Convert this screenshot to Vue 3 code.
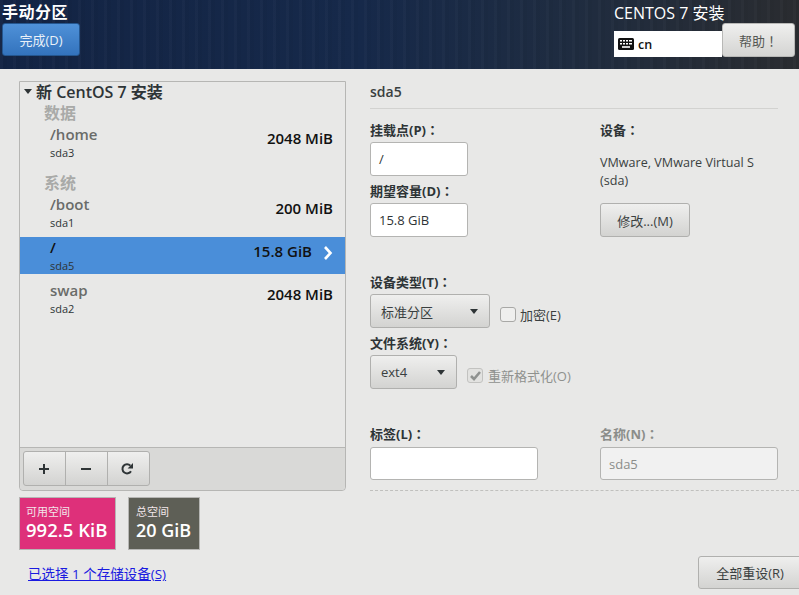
<script setup>
const groups = [
  { name: '数据', items: [{ m: '/home', d: 'sda3', s: '2048 MiB' }] },
  { name: '系统', items: [
    { m: '/boot', d: 'sda1', s: '200 MiB' },
    { m: '/', d: 'sda5', s: '15.8 GiB', sel: true },
    { m: 'swap', d: 'sda2', s: '2048 MiB' }
  ] }
]
</script>

<template>
  <div class="page">
    <header class="top">
      <div class="top-left">
        <div class="title">手动分区</div>
        <button class="done">完成(D)</button>
      </div>
      <div class="top-right">
        <div class="brand">CENTOS 7 安装</div>
        <div class="kb-row">
          <div class="kb">
            <svg width="16" height="12" viewBox="0 0 16 12"><rect width="16" height="12" rx="1.5" fill="#111"/><g fill="#fff"><rect x="2" y="2" width="2" height="1.5"/><rect x="5" y="2" width="2" height="1.5"/><rect x="8" y="2" width="2" height="1.5"/><rect x="11" y="2" width="3" height="1.5"/><rect x="2" y="5" width="2" height="1.5"/><rect x="5" y="5" width="2" height="1.5"/><rect x="8" y="5" width="2" height="1.5"/><rect x="11" y="5" width="3" height="1.5"/><rect x="4" y="8.2" width="8" height="1.6"/></g></svg>
            <span>cn</span>
          </div>
          <button class="help">帮助<span class="colon">！</span></button>
        </div>
      </div>
    </header>

    <main class="body">
      <section class="left">
        <div class="panel">
          <div class="tree">
            <div class="root"><span class="caret"></span>新 CentOS 7 安装</div>
            <template v-for="g in groups" :key="g.name">
              <div class="group">{{ g.name }}</div>
              <div v-for="i in g.items" :key="i.d" class="row" :class="{ sel: i.sel }">
                <div class="names">
                  <div class="mount">{{ i.m }}</div>
                  <div class="dev">{{ i.d }}</div>
                </div>
                <div class="size">{{ i.s }}</div>
                <svg v-if="i.sel" class="chev" width="10" height="14" viewBox="0 0 10 14"><path d="M2 1 7.5 7 2 13" fill="none" stroke="#fff" stroke-width="2.6"/></svg>
              </div>
            </template>
          </div>
          <div class="toolbar">
            <div class="tools">
              <button class="tool"><svg width="12" height="12" viewBox="0 0 12 12"><path d="M6 1v10M1 6h10" stroke="#2e3436" stroke-width="2"/></svg></button>
              <button class="tool"><svg width="12" height="12" viewBox="0 0 12 12"><path d="M1 6h10" stroke="#2e3436" stroke-width="2"/></svg></button>
              <button class="tool"><svg width="14" height="14" viewBox="0 0 14 14"><path d="M11 9.2A4.6 4.6 0 1 1 10.4 3.6" fill="none" stroke="#2e3436" stroke-width="2"/><path d="M13 1v5.6H7.6z" fill="#2e3436"/></svg></button>
            </div>
          </div>
        </div>
        <div class="stats">
          <div class="stat free"><div class="cap">可用空间</div><div class="val">992.5 KiB</div></div>
          <div class="stat total"><div class="cap">总空间</div><div class="val">20 GiB</div></div>
        </div>
        <a class="link">已选择 1 个存储设备(S)</a>
      </section>

      <section class="right">
        <div class="heading">sda5</div>
        <div class="cols">
          <div class="col-a">
            <label class="lab">挂载点(P)<span class="colon">：</span></label>
            <div class="input small">/</div>
            <label class="lab second">期望容量(D)<span class="colon">：</span></label>
            <div class="input small">15.8 GiB</div>
          </div>
          <div class="col-b">
            <label class="lab">设备<span class="colon">：</span></label>
            <div class="devname">VMware, VMware Virtual S<br>(sda)</div>
            <button class="modify">修改...(M)</button>
          </div>
        </div>
        <label class="lab type-lab">设备类型(T)<span class="colon">：</span></label>
        <div class="opt-row">
          <button class="combo w120"><span>标准分区</span><i class="caret dark"></i></button>
          <span class="check"></span><span class="check-text">加密(E)</span>
        </div>
        <label class="lab fs-lab">文件系统(Y)<span class="colon">：</span></label>
        <div class="opt-row">
          <button class="combo w87"><span>ext4</span><i class="caret dark"></i></button>
          <span class="check on"><svg width="13" height="13" viewBox="0 0 13 13"><path d="M2 7l3 3 6-7" fill="none" stroke="#8f9290" stroke-width="2.6"/></svg></span><span class="check-text off">重新格式化(O)</span>
        </div>
        <div class="names-row">
          <div class="f-a">
            <label class="lab">标签(L)<span class="colon">：</span></label>
            <div class="input wide"></div>
          </div>
          <div class="f-b">
            <label class="lab off">名称(N)<span class="colon">：</span></label>
            <div class="input wide disabled">sda5</div>
          </div>
        </div>
        <div class="dash"></div>
        <div class="reset-row"><button class="reset">全部重设(R)</button></div>
      </section>
    </main>
  </div>
</template>

<style>
html, body { margin: 0; background: #e8e8e7; overflow: hidden; }
</style>

<style scoped>
* { box-sizing: border-box; }
.page {
  width: 799px; height: 595px; overflow: hidden;
  background: #e8e8e7; color: #2e3436;
  font-family: "Open Sans", "Noto Sans CJK SC", sans-serif;
  font-size: 13px;
}
button { font-family: inherit; margin: 0; }
.colon { font-family: "Noto Sans CJK TC", sans-serif; }
.top {
  height: 69px; display: flex; justify-content: space-between; color: #fff;
  background:
    repeating-linear-gradient(90deg, rgba(255,255,255,.018) 0 3px, rgba(0,0,0,.03) 3px 7px, transparent 7px 13px),
    linear-gradient(90deg, #132444 0%, #16294a 45%, #1f2c40 72%, #2a2c30 100%);
}
.top-left { padding: 2px 0 0 2px; }
.title { font-size: 16px; font-weight: 700; line-height: 20px; letter-spacing: .5px; }
.done {
  display: block; margin-top: 1px; width: 78px; height: 33px; padding: 0;
  border: 1px solid #24568f; border-radius: 3px; color: #e9f0f8; font-size: 13px;
  background: linear-gradient(#4f91d8, #3373bd);
}
.top-right { width: 185px; padding-top: 3px; }
.brand { font-size: 16px; line-height: 20px; }
.kb-row { display: flex; height: 26px; margin-top: 8px; position: relative; }
.kb {
  width: 108px; height: 26px; background: #fff; color: #111;
  display: flex; align-items: center; gap: 4px; padding-left: 4px;
  font-size: 12.5px; font-weight: 600;
}
.help {
  position: absolute; left: 108px; top: -8px; width: 73px; height: 34px; padding: 0;
  border: 1px solid #b8b8b6; border-radius: 3px; color: #555753; font-size: 13px;
  background: linear-gradient(#efefee, #d4d4d2);
}
.body { position: relative; display: flex; height: 526px; }
.left { width: 370px; padding: 12px 0 0 19px; flex: none; }
.panel {
  width: 327px; height: 410px; border: 1px solid #b6b6b4; border-radius: 0 0 4px 4px;
  display: flex; flex-direction: column;
}
.tree { flex: 1; }
.root { height: 18px; margin-bottom: 2px; font-size: 16px; font-weight: 600; color: #2e3436; padding-left: 4px; display: flex; align-items: center; white-space: nowrap; }
.caret {
  display: inline-block; width: 0; height: 0; margin: 0 4px 0 0;
  border-left: 4.5px solid transparent; border-right: 4.5px solid transparent; border-top: 5px solid #2e3436;
}
.group { font-size: 16px; font-weight: 700; color: #a9aaa8; padding-left: 24px; line-height: 22px; height: 22px; margin-top: 11px; }
.root + .group { margin-top: 0; }
.row { height: 37px; margin-bottom: 6px; position: relative; display: flex; padding: 0 12px 0 30px; }
.names { flex: 1; }
.mount { font-size: 15px; line-height: 20px; margin-bottom: 2px; color: #6a6c69; font-weight: 600; }
.dev { font-size: 11px; line-height: 14px; color: #2e3436; }
.size { font-size: 15px; font-weight: 600; color: #111; line-height: 28px; }
.row.sel { background: #4a8ed9; padding-right: 33px; }
.row.sel .mount { color: #111; }
.chev { position: absolute; right: 12px; top: 9px; }
.toolbar { height: 43px; border-top: 1px solid #b6b6b4; background: #d9d9d7; padding: 3px 0 0 3px; border-radius: 0 0 4px 4px; }
.tools { display: flex; }
.tool {
  width: 43px; height: 35px; padding: 0 2px 0 0; border: 1px solid #b0b0ae; margin-left: -1px;
  display: flex; align-items: center; justify-content: center;
  background: linear-gradient(#efefee, #d3d3d1);
}
.tool:first-child { margin-left: 0; border-radius: 3px 0 0 3px; }
.tool:last-child { border-radius: 0 3px 3px 0; padding-right: 4px; }
.stats { display: flex; gap: 12px; margin-top: 6px; }
.stat { height: 53px; border: 1px solid #b6b6b4; color: #fff; padding: 6px 4px 0 6px; }
.free { width: 97px; background: #de307a; }
.total { width: 72px; background: #5e5f56; padding-left: 7px; }
.cap { font-size: 11px; line-height: 15px; color: #f2e6ea; }
.val { font-size: 18.5px; font-weight: 600; line-height: 22px; white-space: nowrap; }
.total .val { font-size: 18px; }
.link { display: block; margin: 15px 0 0 9px; color: #1a1ae0; text-decoration: underline; font-size: 13.5px; line-height: 18px; }
.right { flex: 1; padding: 12px 21px 0 0; width: 408px; position: relative; }
.heading { font-size: 14px; font-weight: 600; color: #3a3f40; line-height: 21px; height: 28px; border-bottom: 1px solid #d2d2d0; }
.cols { display: flex; margin-top: 12px; }
.col-a { width: 230px; }
.col-b { flex: 1; }
.lab { display: block; font-size: 13px; font-weight: 700; line-height: 18px; color: #2e3436; white-space: nowrap; }
.lab.off { color: #8b8d8a; }
.second { margin-top: 6px; }
.input {
  background: #fff; border: 1px solid #b4b4b2; border-radius: 3px;
  height: 34px; line-height: 32px; padding-left: 8px; font-size: 13px; color: #2e3436;
}
.small { width: 98px; margin-top: 3px; }
.devname { font-size: 12.6px; line-height: 18px; margin-top: 15px; color: #3a3f40; white-space: nowrap; }
.modify {
  display: block; margin-top: 13px; width: 90px; height: 34px; padding: 0;
  border: 1px solid #b0b0ae; border-radius: 3px; color: #3a3f40; font-size: 13px;
  background: linear-gradient(#efefee, #d3d3d1);
}
.type-lab { margin-top: 36px; }
.fs-lab { margin-top: 6px; }
.opt-row { display: flex; align-items: center; height: 34px; margin-top: 3px; }
.combo {
  height: 34px; padding: 0 11px 0 10px; display: flex; align-items: center; justify-content: space-between;
  border: 1px solid #b0b0ae; border-radius: 3px; color: #3a3f40; font-size: 13px;
  background: linear-gradient(#efefee, #d3d3d1);
}
.w120 { width: 120px; }
.w87 { width: 87px; }
.caret.dark { margin: 0; }
.check {
  width: 16px; height: 15px; margin: 7px 0 0 10px; border: 1px solid #a8a8a6; border-radius: 3px;
  background: #efefee; display: flex; align-items: center; justify-content: center;
}
.check.on { background: #e2e2e0; border-color: #c2c2c0; }
.check-text { margin: 6px 0 0 4px; font-size: 13px; color: #3a3f40; }
.check-text.off { color: #8f918e; margin-left: 5px; }
.names-row { display: flex; margin-top: 36px; }
.f-a { width: 230px; }
.f-b { flex: 1; }
.wide { margin-top: 4px; height: 33px; }
.f-a .wide { width: 168px; }
.f-b .wide { width: 178px; }
.disabled { background: #f1f1f1; color: #8b8d8a; }
.dash { margin-top: 10px; margin-right: -21px; border-top: 1px dashed #c0c0be; }
.reset-row { position: absolute; right: -3px; bottom: 6px; }
.reset {
  width: 104px; height: 33px; padding: 0; display: block;
  border: 1px solid #b0b0ae; border-radius: 3px; color: #3a3f40; font-size: 13px;
  background: linear-gradient(#efefee, #d3d3d1);
}
</style>
